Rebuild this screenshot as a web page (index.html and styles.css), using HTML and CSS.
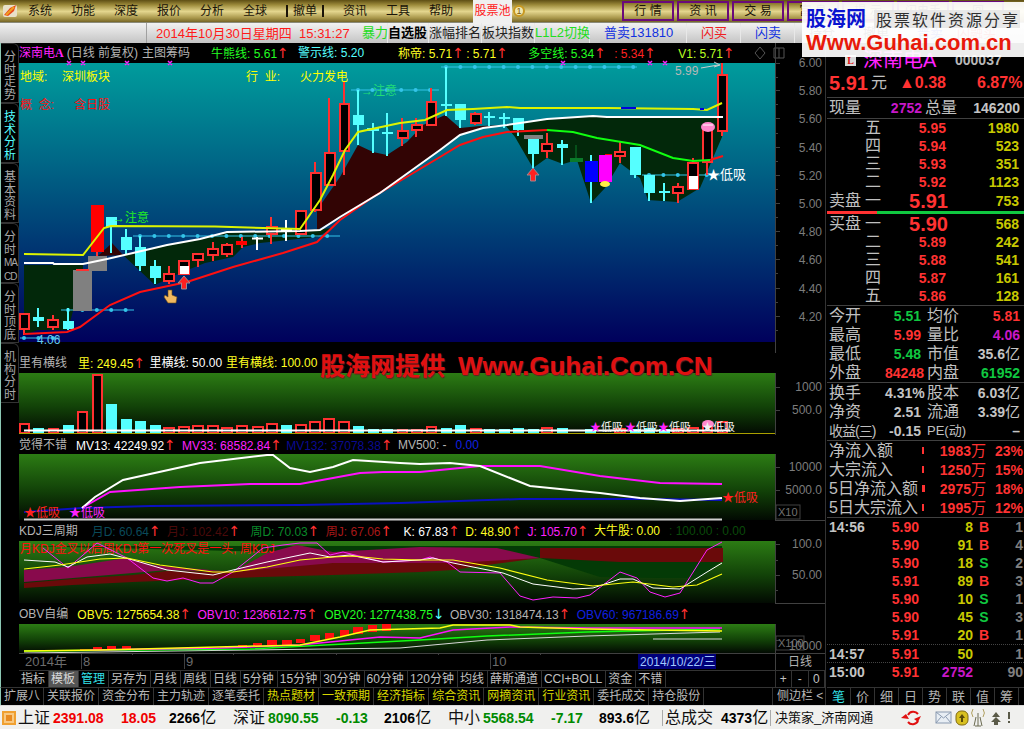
FILE: index.html
```html
<!DOCTYPE html>
<html lang="zh-CN">
<head>
	<meta charset="UTF-8">
	<title>深南电A 日线</title>
	<link rel="stylesheet" href="styles.css">
</head>
<body>
<div class="app">

	<!-- menu -->
	<div class="menubar">
		<svg class="app-icon" width="16" height="16" viewBox="0 0 16 16"><rect x="1" y="2" width="14" height="12" rx="2" fill="#e8e0c8"/><path d="M2 12 L8 5 L14 2 L12 8 L6 13Z" fill="#e8481c"/><path d="M4 12 L12 4" stroke="#f0a020" stroke-width="2"/></svg>
		<a class="menu">系统</a><a class="menu">功能</a><a class="menu">深度</a><a class="menu">报价</a><a class="menu">分析</a><a class="menu">全球</a>
		<a class="menu menu-cancel">撤单</a>
		<a class="menu">资讯</a><a class="menu">工具</a><a class="menu">帮助</a>
		<a class="pool-tab">股票池</a>
		<span class="pool-badge">1</span>
		<div class="mode-btns">
			<a class="mode">行 情</a><a class="mode">资 讯</a><a class="mode">交 易</a><a class="mode">富 息</a><a class="mode">提 示</a><a class="mode">闪电手</a><a class="mode">回</a>
		</div>
	</div>

	<!-- toolbar -->
	<div class="toolbar">
		<span class="tb-blank"></span>
		<span class="tb-date">2014年10月30日星期四&nbsp; 15:31:27</span>
		<a class="tb tb-green tb-w26">暴力</a>
		<a class="tb tb-bold">自选股</a>
		<a class="tb tb-w52">涨幅排名</a>
		<a class="tb tb-w52">板块指数</a>
		<a class="tb tb-green">L1L2切换</a>
		<a class="tb tb-blue tb-w97">普卖131810</a>
		<a class="tb tb-red tb-w54">闪买</a>
		<a class="tb tb-blue tb-w54">闪卖</a>
		<a class="tb tb-w54">持仓</a>
		<a class="tb tb-w54">撤单</a>
		<a class="tb tb-blue tb-w54">普卖</a>
		<a class="tb tb-red">闪融买</a>
	</div>

	<div class="workspace">
		<div class="left">
			<div class="upper">
				<div class="sidetabs">
					<a class="stab">分<br>时<br>走<br>势</a>
					<a class="stab active">技<br>术<br>分<br>析</a>
					<a class="stab">基<br>本<br>资<br>料</a>
					<a class="stab">分<br>时<br><span class="tiny">MA</span><br><span class="tiny">CD</span></a>
					<a class="stab">分<br>时<br>顶<br>底</a>
					<a class="stab">机<br>构<br>分<br>时</a>
				</div>

				<div class="charts">
					<!-- main chart -->
					<div class="head">
						<span class="magenta">深南电<b>A</b></span><span class="grey ml3">(日线 前复权)</span><span class="grey ml4">主图筹码</span>
						<span class="green ml21">牛熊线: 5.61<i class="up">↑</i></span>
						<span class="cyan ml10">警示线: 5.20</span>
						<span class="yellow ml34">称帝: 5.71<i class="up">↑</i></span>
						<span class="yellow ml3">: 5.71<i class="up">↑</i></span>
						<span class="green ml21">多空线: 5.34<i class="up">↑</i></span>
						<span class="red ml9">: 5.34<i class="up">↑</i></span>
						<span class="lime ml23">V1: 5.71<i class="up">↑</i></span>
						<svg class="head-icons" width="32" height="14" viewBox="0 0 32 14"><path d="M6 1 L11 7 L6 13 L1 7Z M20 2H30V12H20Z M25 2V12" fill="none" stroke="#555"/></svg>
					</div>
					<svg class="plot h290" viewBox="19 63 806 290">
						<defs>
							<linearGradient id="sea" x1="0" y1="0" x2="0" y2="1"><stop offset="0" stop-color="#009c9c"/><stop offset=".3" stop-color="#006f8a"/><stop offset="1" stop-color="#00005c"/></linearGradient>
							<linearGradient id="grass" x1="0" y1="0" x2="0" y2="1"><stop offset="0" stop-color="#2c7c14"/><stop offset=".55" stop-color="#124208"/><stop offset="1" stop-color="#020a02"/></linearGradient>
						</defs>
						<rect x="19" y="63" width="756" height="279" fill="url(#sea)"/>
						<!-- bands -->
						<path class="fill-green" d="M24 265H83V311H73L68 330H38L24 335Z"/>
						<path class="fill-green" d="M122 254L155 285 180 273 205 263 233 257 243 247 260 243 317 237 333 228 300 231 227 232 200 239 167 245 133 253Z"/>
						<path class="fill-green" d="M505 125L515 137 533 168 547 158 563 164 577 160 591 203 605 188 620 163 640 178 648 200 677 202 700 188 722 137 723 117 607 117 593 116 547 119 527 122Z"/>
						<path class="fill-maroon" d="M98 256L112 243 123 255Z"/>
						<path class="fill-maroon" d="M317 210L340 177 358 145 373 152 387 155 407 142 423 125 445 115 460 128 480 126 505 125 483 128 460 135 440 150 380 193 340 217 317 230Z"/>
						<!-- dotted levels -->
						<path class="dots-line" d="M441 67H637M351 90H439M133 236H340M61 310H134M20 338H60M642 175H720"/>
						<path class="dots" d="M446 67H637M358 90H439M140 236H340M68 310H134M24 338H60M649 175H720"/>
						<!-- candles -->
						<path class="wick-c" d="M38 308V327M68 308V330M111 227V253M126 229V254M140 236V271M155 260V284M358 90V145M373 123V153M387 113V156M446 67V116M460 104V128M489 112V126M504 113V128M518 118V136M533 139V168M562 140V165M591 155V203M635 147V178M649 175V201M664 183V201"/>
						<path class="wick-r" d="M24 329V335M53 315V330M169 266V284M198 260V267M213 242V261M227 243V257M242 237V248M271 217V244M315 162V212M329 98V185M344 82V175M402 118V146M416 118V137M431 88V125M475 112V125M547 133V158M620 142V163M678 183V203M693 158V189M707 128V175M722 63V136"/>
						<path class="wick-w" d="M257 237V250M252 238.5H263M286 220V241M281 230H292"/>
						<path class="wick-g" d="M576 145V162"/>
						<g class="cy">
							<rect x="33" y="317" width="11" height="4"/><rect x="63" y="321" width="11" height="8"/><rect x="106" y="217" width="11" height="10"/><rect x="121" y="237" width="11" height="13"/><rect x="135" y="247" width="11" height="19"/><rect x="150" y="266" width="11" height="12"/><rect x="353" y="115" width="11" height="10"/><rect x="367" y="128" width="12" height="3"/><rect x="382" y="132" width="11" height="2"/><rect x="441" y="104" width="11" height="2"/><rect x="455" y="104" width="11" height="16"/><rect x="484" y="116" width="11" height="2"/><rect x="499" y="117" width="11" height="2"/><rect x="513" y="118" width="11" height="12"/><rect x="528" y="139" width="11" height="15"/><rect x="557" y="144" width="11" height="4"/><rect x="630" y="147" width="11" height="28"/><rect x="644" y="175" width="11" height="18"/><rect x="659" y="191" width="11" height="2"/>
						</g>
						<g class="rd">
							<rect x="20" y="314" width="9" height="15"/><rect x="48" y="320" width="10" height="7"/><rect x="164" y="274" width="10" height="7"/><rect x="179" y="261" width="10" height="13"/><rect x="193" y="254" width="10" height="6"/><rect x="208" y="249" width="10" height="6"/><rect x="222" y="245" width="10" height="9"/><rect x="267" y="227" width="10" height="7"/><rect x="296" y="211" width="10" height="23"/><rect x="311" y="173" width="10" height="37"/><rect x="325" y="153" width="10" height="32"/><rect x="340" y="104" width="9" height="47"/><rect x="398" y="131" width="10" height="7"/><rect x="412" y="125" width="10" height="5"/><rect x="427" y="102" width="9" height="23"/><rect x="471" y="114" width="10" height="9"/><rect x="542" y="144" width="10" height="7"/><rect x="615" y="152" width="10" height="4"/><rect x="673" y="187" width="10" height="6"/><rect x="688" y="163" width="10" height="26"/><rect x="703" y="129" width="9" height="33"/><rect x="718" y="75" width="9" height="56"/>
						</g>
						<rect class="gray-block" x="73" y="270" width="19" height="41"/>
						<rect class="gray-block" x="88" y="256" width="19" height="15"/>
						<rect class="gray-block" x="524" y="135" width="19" height="4"/>
						<path class="wick-r" d="M76 270H89M97 252V256"/>
						<rect class="solid-red" x="91" y="205" width="13" height="47"/>
						<rect class="solid-red" x="236" y="241" width="11" height="4"/>
						<rect class="solid-red" x="605" y="154" width="7" height="2"/>
						<rect class="solid-white" x="180" y="266" width="9" height="8"/>
						<rect class="solid-white" x="689" y="176" width="9" height="13"/>
						<rect x="570" y="158" width="13" height="4" fill="#0a7a2a"/>
						<rect x="585" y="161" width="13" height="21" fill="#0000ff"/>
						<rect x="599" y="155" width="13" height="27" fill="#ff00ff"/>
						<!-- moving averages -->
						<polyline class="ma-red" points="24,334 67,332 80,327 110,305 140,292 187,282 233,267 283,253 317,242 340,220 373,197 440,157 460,145 483,137 507,132 547,130"/>
						<polyline class="ma-red" points="710,160 723,156"/>
						<polyline class="ma-green" points="547,130 573,132 597,138 640,145 673,158 693,161 710,160"/>
						<polyline class="ma-white" points="24,263 53,263 54,264 83,264 107,259 133,253 167,245 200,239 227,232 300,231 320,230 340,217 380,193 440,150 460,135 483,128 507,125 527,122 547,119 593,116 607,117 723,117"/>
						<polyline class="ma-yellow" points="24,254 83,255 104,228 111,226 215,226.500 300,229 320,200 333,175 345,150 358,132 400,123 425,120 447,110 473,109 507,107 520,108 607,108 693,109 707,110 722,103"/>
						<path d="M621 108H636M700 109H704" stroke="#0000dd" stroke-width="2"/>
						<!-- marks -->
						<path class="cross" d="M67 61l4 4m0-4l-4 4M81 61l4 4m0-4l-4 4M125 61l4 4m0-4l-4 4M168 61l4 4m0-4l-4 4M561 61l4 4m0-4l-4 4M648 61l4 4m0-4l-4 4M663 61l4 4m0-4l-4 4"/>
						<path class="up-mark" d="M184 276L190 283H186.500V289H181.500V283H178Z"/>
						<path class="up-mark" d="M533 168L539 175H535.500V181H530.500V175H527Z"/>
						<ellipse cx="708" cy="127" rx="7" ry="5" fill="#ff88cc"/><path d="M703 125L713 125" stroke="#fff"/>
						<ellipse cx="605" cy="184" rx="5" ry="3" fill="#ffee44"/>
						<!-- hand cursor -->
						<path d="M168 290V297L165 295 164 297 168 303H176L177 297 172 295V290Z" fill="#f0b860" stroke="#6a4a10" stroke-width=".6"/>
						<!-- labels -->
						<text class="t-yellow" x="20" y="81">地域:</text><text class="t-yellow" x="62" y="81">深圳板块</text>
						<text class="t-yellow" x="246" y="81">行&nbsp; 业:</text><text class="t-yellow" x="300" y="81">火力发电</text>
						<text class="t-red" x="20" y="109">概&nbsp; 念:</text><text class="t-red" x="74" y="109">含日股</text>
						<text class="t-green" x="113" y="222">→注意</text>
						<text class="t-green t-soft" x="361" y="95">→注意</text>
						<text class="t-ice" x="37" y="344">4.06</text>
						<text class="t-pale" x="675" y="75">5.99</text>
						<path d="M701 68L718 65M714 62L720 65 714 67" fill="none" stroke="#ccc"/>
						<text class="t-white" x="707" y="179">★低吸</text>
						<!-- axis -->
						<path class="axis" d="M775.500 43V353M775 63h5M775 77h3M775 90h5M775 104h3M775 118h5M775 133h3M775 147h5M775 161h3M775 175h5M775 189h3M775 203h5M775 217h3M775 231h5M775 245h3M775 259h5M775 273h3M775 288h5M775 302h3M775 316h5M775 330h3"/>
						<g class="axis-text">
							<text x="822" y="67">6.00</text><text x="822" y="95">5.80</text><text x="822" y="123">5.60</text><text x="822" y="152">5.40</text><text x="822" y="180">5.20</text><text x="822" y="208">5.00</text><text x="822" y="236">4.80</text><text x="822" y="264">4.60</text><text x="822" y="293">4.40</text><text x="822" y="321">4.20</text>
						</g>
					</svg>

					<!-- volume -->
					<div class="head">
						<span class="grey">里有横线</span>
						<span class="yellow ml11">里: 249.45<i class="up">↑</i></span>
						<span class="white ml5">里横线: 50.00</span>
						<span class="yellow ml4">里有横线: 100.00</span>
					</div>
					<svg class="plot h62" viewBox="19 373 806 62">
						<rect x="19" y="373" width="756" height="61" fill="url(#grass)"/>
						<g class="cy">
							<rect x="33" y="428" width="11" height="5"/><rect x="63" y="425" width="11" height="8"/><rect x="106" y="404" width="11" height="29"/><rect x="121" y="419" width="11" height="14"/><rect x="135" y="421" width="11" height="12"/><rect x="150" y="425" width="11" height="8"/><rect x="281" y="425" width="11" height="8"/><rect x="353" y="426" width="11" height="7"/><rect x="368" y="429" width="11" height="4"/><rect x="382" y="429" width="11" height="4"/><rect x="441" y="428" width="11" height="5"/><rect x="455" y="425" width="11" height="8"/><rect x="484" y="429" width="11" height="4"/><rect x="499" y="429" width="11" height="4"/><rect x="513" y="428" width="11" height="5"/><rect x="528" y="429" width="11" height="4"/><rect x="557" y="428" width="11" height="5"/><rect x="585" y="429" width="11" height="4"/><rect x="630" y="429" width="11" height="4"/><rect x="644" y="428" width="11" height="5"/><rect x="659" y="429" width="11" height="4"/>
						</g>
						<g class="rd">
							<rect x="20" y="424" width="9" height="9"/><rect x="49" y="429" width="9" height="4"/><rect x="78" y="412" width="9" height="21"/><rect x="93" y="375" width="9" height="58"/><rect x="164" y="428" width="10" height="5"/><rect x="179" y="427" width="10" height="6"/><rect x="193" y="426" width="10" height="7"/><rect x="208" y="426" width="10" height="7"/><rect x="222" y="428" width="10" height="5"/><rect x="237" y="426" width="10" height="7"/><rect x="253" y="427" width="10" height="6"/><rect x="267" y="424" width="10" height="9"/><rect x="296" y="425" width="10" height="8"/><rect x="310" y="422" width="10" height="11"/><rect x="324" y="419" width="10" height="14"/><rect x="339" y="422" width="10" height="11"/><rect x="398" y="430" width="9" height="3"/><rect x="412" y="430" width="10" height="3"/><rect x="427" y="427" width="9" height="6"/><rect x="471" y="429" width="10" height="4"/><rect x="542" y="428" width="10" height="5"/><rect x="615" y="429" width="10" height="4"/><rect x="673" y="429" width="10" height="4"/><rect x="688" y="428" width="10" height="5"/><rect x="703" y="426" width="9" height="7"/><rect x="718" y="422" width="9" height="11"/>
						</g>
						<path d="M24 430.500H730" stroke="#fff" stroke-width="2"/>
						<path d="M19 433.500H775" stroke="#aaa000"/>
						<ellipse cx="708" cy="424" rx="6" ry="4" fill="#ff88cc"/>
						<text class="t-white-s" x="590" y="431"><tspan class="t-fill-magenta">★</tspan>低吸</text>
						<text class="t-white-s" x="625" y="431"><tspan class="t-fill-magenta">★</tspan>低吸</text>
						<text class="t-white-s" x="658" y="431"><tspan class="t-fill-magenta">★</tspan>低吸</text>
						<text class="t-white-s" x="702" y="431">★低吸</text>
						<path class="axis" d="M775.500 373V435M775 387h5M775 410h5"/>
						<g class="axis-text"><text x="822" y="391">1000</text><text x="822" y="414">500.0</text></g>
					</svg>

					<!-- mv -->
					<div class="head h19">
						<span class="grey">觉得不错</span>
						<span class="white ml9">MV13: 42249.92<i class="up">↑</i></span>
						<span class="magenta ml7">MV33: 68582.84<i class="up">↑</i></span>
						<span class="navy ml5">MV132: 37078.38<i class="up">↑</i></span>
						<span class="grey ml6">MV500: -</span>
						<span class="blue ml9">0.00</span>
					</div>
					<svg class="plot h67" viewBox="19 454 806 67">
						<rect x="19" y="454" width="756" height="66" fill="url(#grass)"/>
						<path d="M24 519.500H722" stroke="#d0d0d0" stroke-width="2"/>
						<polyline class="ln-blue" points="24,512 82,508 150,506 300,505 400,503 520,499 650,499 722,500"/>
						<polyline class="ln-magenta" points="82,508 110,492 180,487 250,484 300,484 333,478 360,473 383,472 420,472 480,466 540,466 600,476 660,483 722,484"/>
						<polyline class="ln-white" points="82,508 95,497 123,480 200,463 267,455 273,455 290,468 310,472 333,467 353,460 400,463 420,464 450,463 480,466 510,478 530,486 570,490 600,493 640,498 680,501 722,498"/>
						<text class="t-red-s" x="24" y="517">★低吸</text>
						<text class="t-magenta-s" x="69" y="517">★低吸</text>
						<text class="t-red-s" x="722" y="502">★低吸</text>
						<path class="axis" d="M775.500 454V521M775 467h5M775 490h5M775 520.500H825"/>
						<g class="axis-text"><text x="822" y="471">10000</text><text x="822" y="494">5000.0</text></g>
						<rect class="xbox" x="776" y="505" width="24" height="14"/>
						<text class="x-label" x="778" y="516">X10</text>
					</svg>

					<!-- kdj -->
					<div class="head">
						<span class="grey">KDJ三周期</span>
						<span class="dim-teal ml14">月D: 60.64<i class="up">↑</i></span>
						<span class="dim-red ml7">月J: 102.42<i class="up">↑</i></span>
						<span class="mid-green ml11">周D: 70.03<i class="up">↑</i></span>
						<span class="mid-red ml7">周J: 67.06<i class="up">↑</i></span>
						<span class="white ml12">K: 67.83<i class="up">↑</i></span>
						<span class="yellow ml6">D: 48.90<i class="up">↑</i></span>
						<span class="magenta ml6">J: 105.70<i class="up">↑</i></span>
						<span class="yellow ml6">大牛股: 0.00</span>
						<span class="dim-green ml9">: 100.00 : 0.00</span>
					</div>
					<svg class="plot h63" viewBox="19 541 806 63">
						<rect x="19" y="541" width="756" height="62" fill="url(#grass)"/>
						<path d="M24 546H722V561L700 578 660 578 600 577 540 558Z" fill="#043a06"/>
						<path d="M540 548H723V562H660L620 562 540 558Z" fill="#6a0a0a"/>
						<path d="M24 583L73 579 133 575 167 571 233 572 267 565 333 563 420 562 540 558 487 565 453 570 420 572 333 575 233 578 133 582 73 585 24 588Z" fill="#6a0a0a"/>
						<path class="fill-purple" d="M24 570L67 567 127 558 153 565 233 572 267 553 297 545 333 552 420 547 497 548 540 558 453 563 420 563 333 563 233 572 167 570 133 573 73 578 24 582Z"/>
						<text class="t-red" x="20" y="553">月KDJ金叉以后周KDJ第一次死叉是一头, 周KDJ</text>
						<polyline class="kd-magenta" points="43,548 68,568 97,543 127,558 153,578 167,581 183,578 200,583 213,583 233,572 263,548 283,545 300,543 317,543 330,555 343,552 383,562 420,560 430,557 447,562 460,572 500,573 520,596 533,600 553,597 577,598 590,595 620,572 637,578 650,592 665,597 680,593 707,550 722,542"/>
						<polyline class="kd-white" points="24,560 55,562 68,567 87,557 110,554 133,560 167,570 213,575 233,570 267,562 310,553 330,557 350,555 383,562 420,560 433,558 453,563 503,573 533,584 573,589 593,588 620,579 633,579 653,588 680,589 707,572 722,563"/>
						<polyline class="kd-yellow" points="24,569 60,565 100,559 127,558 160,565 213,572 233,572 267,567 300,560 333,557 353,556 383,559 420,560 453,560 500,568 547,580 593,586 633,582 673,587 697,585 722,574"/>
						<path class="axis" d="M775.500 541V604M775 544h5M775 560h3M775 575h5M775 590h3M775 603.500H825"/>
						<g class="axis-text"><text x="822" y="548">100.0</text><text x="822" y="579">50.00</text></g>
					</svg>

					<!-- obv -->
					<div class="head">
						<span class="grey">OBV自编</span>
						<span class="yellow ml9">OBV5: 1275654.38<i class="up">↑</i></span>
						<span class="magenta ml7">OBV10: 1236612.75<i class="up">↑</i></span>
						<span class="green ml7">OBV20: 1277438.75<i class="down">↓</i></span>
						<span class="grey ml6">OBV30: 1318474.13<i class="up">↑</i></span>
						<span class="blue ml7">OBV60: 967186.69<i class="up">↑</i></span>
					</div>
					<svg class="plot h29" viewBox="19 624 806 29">
						<rect x="19" y="624" width="756" height="29" fill="url(#grass)"/>
						<path class="steps-red" d="M33 650h10v1H33zM80 649h10v2H80zM93 647h9v3h-9zM107 646h9v3h-9zM122 646h9v3h-9zM238 645h9v3h-9zM253 643h9v4h-9zM267 640h10v5H267zM282 640h10v5H282zM296 639h9v4h-9zM310 635h10v6H310zM325 633h9v6h-9zM340 630h9v6h-9zM353 627h10v7H353zM368 625h9v7h-9zM382 624h9v7h-9z"/>
						<polyline class="ob-white" points="24,653 400,648 487,640 587,636 720,632"/>
						<polyline class="ob-green" points="24,651 250,649 420,640 487,636 587,632 720,629"/>
						<polyline class="ob-magenta" points="90,650 220,648 300,645 380,637 420,638 453,630 510,627 587,628 670,628 722,628"/>
						<polyline class="ob-yellow" points="24,651 100,650 300,645 340,637 370,630 440,628 453,625 510,625 520,627 587,629 722,631"/>
						<path class="ob-white" d="M653 639H722"/>
						<path class="axis" d="M775.500 624V653M775 640h5"/>
						<rect class="xbox" x="776" y="636" width="28" height="14"/>
						<text class="x-label" x="778" y="647">X100</text>
						<text class="axis-text" x="822" y="650">10000</text>
					</svg>

					<!-- time axis -->
					<svg class="plot h17" viewBox="19 653 806 17">
						<path class="axis" d="M19 653.500H825M81.500 653v16M184.500 653v16M490.500 653v16M775.500 653V670M132 653v2M233 653v2M336 653v2M438 653v2M540 653v2"/>
						<text class="date-text" x="25" y="666">2014年</text>
						<text class="date-text" x="83" y="666">8</text>
						<text class="date-text" x="186" y="666">9</text>
						<text class="date-text" x="492" y="666">10</text>
						<rect x="638" y="654" width="78" height="15" fill="#00007a"/>
						<text class="date-pick" x="640" y="666">2014/10/22/三</text>
						<text class="date-line" x="788" y="666">日线</text>
					</svg>

					<div class="tabs1">
						<a class="t1">指标</a><a class="t1 t1-on">模板</a><a class="t1 t1-cyan">管理</a><a class="t1">另存为</a><a class="t1">月线</a><a class="t1">周线</a><a class="t1">日线</a><a class="t1">5分钟</a><a class="t1">15分钟</a><a class="t1">30分钟</a><a class="t1">60分钟</a><a class="t1">120分钟</a><a class="t1">均线</a><a class="t1">薛斯通道</a><a class="t1">CCI+BOLL</a><a class="t1">资金</a><a class="t1">不错</a>
						<div class="zoom-btns"><a>+</a><a>-</a><a>0</a></div>
					</div>
				</div>
			</div>

			<div class="tabs2">
				<a class="t2">扩展八</a><a class="t2">关联报价</a><a class="t2">资金分布</a><a class="t2">主力轨迹</a><a class="t2">逐笔委托</a><a class="t2 t2-y">热点题材</a><a class="t2 t2-y">一致预期</a><a class="t2 t2-y">经济指标</a><a class="t2 t2-y">综合资讯</a><a class="t2 t2-y">网摘资讯</a><a class="t2 t2-y">行业资讯</a><a class="t2">委托成交</a><a class="t2">持仓股份</a>
				<a class="t2 t2-side">侧边栏 &lt;</a>
			</div>
		</div>

		<!-- quote panel -->
		<div class="quote">
			<div class="q-title">
				<span class="q-l">L</span><span class="q-name">深南电A</span><span class="q-code">000037</span>
			</div>
			<div class="q-price line">
				<span class="q-now">5.91</span><span class="q-yuan">元</span><span class="q-chg">▲0.38</span><span class="q-pct">6.87%</span>
			</div>
			<div class="q-vol line">
				<span class="lab">现量</span><span class="n purple">2752</span><span class="lab lab-mid">总量</span><span class="n gray">146200</span>
			</div>

			<div class="bk"><span class="lab"></span><span class="lab">五</span><span class="n rd-t">5.95</span><span class="n ye">1980</span></div>
			<div class="bk"><span class="lab"></span><span class="lab">四</span><span class="n rd-t">5.94</span><span class="n ye">523</span></div>
			<div class="bk"><span class="lab"></span><span class="lab">三</span><span class="n rd-t">5.93</span><span class="n ye">351</span></div>
			<div class="bk"><span class="lab"></span><span class="lab">二</span><span class="n rd-t">5.92</span><span class="n ye">1123</span></div>
			<div class="bk bk-big bk-h20"><span class="lab">卖盘</span><span class="lab">一</span><span class="n rd-t">5.91</span><span class="n ye">753</span></div>
			<div class="split"><i class="split-red"></i><i class="split-green"></i></div>
			<div class="bk bk-big bk-h19"><span class="lab">买盘</span><span class="lab">一</span><span class="n rd-t">5.90</span><span class="n ye">568</span></div>
			<div class="bk"><span class="lab"></span><span class="lab">二</span><span class="n rd-t">5.89</span><span class="n ye">242</span></div>
			<div class="bk"><span class="lab"></span><span class="lab">三</span><span class="n rd-t">5.88</span><span class="n ye">541</span></div>
			<div class="bk"><span class="lab"></span><span class="lab">四</span><span class="n rd-t">5.87</span><span class="n ye">161</span></div>
			<div class="bk line"><span class="lab"></span><span class="lab">五</span><span class="n rd-t">5.86</span><span class="n ye">128</span></div>

			<div class="st"><span class="lab">今开</span><span class="n gr-t">5.51</span><span class="lab">均价</span><span class="n rd-t">5.81</span></div>
			<div class="st"><span class="lab">最高</span><span class="n rd-t">5.99</span><span class="lab">量比</span><span class="n purple">4.06</span></div>
			<div class="st"><span class="lab">最低</span><span class="n gr-t">5.48</span><span class="lab">市值</span><span class="n gray">35.6<em>亿</em></span></div>
			<div class="st line"><span class="lab">外盘</span><span class="n rd-t">84248</span><span class="lab">内盘</span><span class="n gr-t">61952</span></div>

			<div class="st"><span class="lab">换手</span><span class="n gray">4.31%</span><span class="lab">股本</span><span class="n gray">6.03<em>亿</em></span></div>
			<div class="st"><span class="lab">净资</span><span class="n gray">2.51</span><span class="lab">流通</span><span class="n gray">3.39<em>亿</em></span></div>
			<div class="st line"><span class="lab lab-tight">收益(三)</span><span class="n gray">-0.15</span><span class="lab lab-pe">PE(动)</span><span class="n gray">–</span></div>

			<div class="fl"><span class="lab">净流入额</span><i class="fbar"></i><span class="n rd-t">1983<em>万</em></span><span class="n rd-t">23%</span></div>
			<div class="fl"><span class="lab">大宗流入</span><i class="fbar"></i><span class="n rd-t">1250<em>万</em></span><span class="n rd-t">15%</span></div>
			<div class="fl"><span class="lab">5日净流入额</span><i class="fbar fbar-w"></i><span class="n rd-t">2975<em>万</em></span><span class="n rd-t">18%</span></div>
			<div class="fl line"><span class="lab">5日大宗流入</span><i class="fbar"></i><span class="n rd-t">1995<em>万</em></span><span class="n rd-t">12%</span></div>

			<div class="tk"><span class="gray">14:56</span><span class="rd-t">5.90</span><span class="ye">8</span><span class="rd-t">B</span><span class="dim">1</span></div>
			<div class="tk"><span></span><span class="rd-t">5.90</span><span class="ye">91</span><span class="rd-t">B</span><span class="dim">4</span></div>
			<div class="tk"><span></span><span class="rd-t">5.90</span><span class="ye">18</span><span class="gr-t">S</span><span class="dim">2</span></div>
			<div class="tk"><span></span><span class="rd-t">5.91</span><span class="ye">89</span><span class="rd-t">B</span><span class="dim">3</span></div>
			<div class="tk"><span></span><span class="rd-t">5.90</span><span class="ye">10</span><span class="gr-t">S</span><span class="dim">1</span></div>
			<div class="tk"><span></span><span class="rd-t">5.90</span><span class="ye">45</span><span class="gr-t">S</span><span class="dim">3</span></div>
			<div class="tk"><span></span><span class="rd-t">5.91</span><span class="ye">20</span><span class="rd-t">B</span><span class="dim">1</span></div>
			<div class="tk dash"><span class="gray">14:57</span><span class="rd-t">5.91</span><span class="ye">50</span><span></span><span class="dim">1</span></div>
			<div class="tk dash"><span class="gray">15:00</span><span class="rd-t">5.91</span><span class="purple">2752</span><span></span><span class="dim">90</span></div>

			<div class="q-tabs"><a class="q-on">笔</a><a>价</a><a>细</a><a>日</a><a>势</a><a>联</a><a>值</a><a>筹</a></div>
		</div>
	</div>

	<!-- status bar -->
	<div class="statusbar">
		<span class="st-icon"></span>
		<div class="idx"><span class="idx-name">上证</span><b class="s-red">2391.08</b><b class="s-red">18.05</b><b class="s-black">2266<em>亿</em></b></div>
		<div class="idx"><span class="idx-name">深证</span><b class="s-green">8090.55</b><b class="s-green">-0.13</b><b class="s-black">2106<em>亿</em></b></div>
		<div class="idx idx-last"><span class="idx-name">中小</span><b class="s-green">5568.54</b><b class="s-green">-7.17</b><b class="s-black">893.6<em>亿</em></b></div>
		<div class="total"><span class="idx-name">总成交</span><b class="s-black">4373<em>亿</em></b></div>
		<div class="net">决策家_济南网通</div>
		<svg class="st-svg" width="119" height="22" viewBox="905 706 119 22">
			<path d="M912 714a6 6 0 0 1 10 -1M922 720a6 6 0 0 1 -10 1" fill="none" stroke="#e01010" stroke-width="2"/><path d="M905 717l5-4 3 5zM925 715l-3 6-4-3z" fill="#e01010"/>
			<rect x="940" y="711" width="15" height="11" fill="#e8eef4" stroke="#8a9ab0"/><path d="M940 711l7.500 6 7.500-6M940 722l5-6M955 722l-5-6" fill="none" stroke="#8a9ab0"/>
			<rect x="960" y="710" width="12" height="14" rx="5" fill="#d8c020" stroke="#806a10"/><path d="M966 713l3 4h-2v4h-2v-4h-2z" fill="#5a4a08"/>
			<path d="M982 712V725M979 725h6M980 716l-2 9M984 716l2 9" stroke="#6a6a50" fill="none"/><path d="M977 708a7 7 0 0 0 0 8M987 708a7 7 0 0 1 0 8" fill="none" stroke="#b0a060"/>
			<path d="M1000 711l4 5h-8zM1000 716l5 5h-10zM998 721h4v3h-4z" fill="#5a5a48"/>
			<path d="M1012 711h2v7h-2zM1012 720h2v2h-2z" fill="#5a5a48"/>
		</svg>
	</div>

	<!-- overlays -->
	<div class="logo">
		<div class="logo-top"><b class="logo-cn">股海网</b><span class="logo-slogan">股票软件资源分享</span></div>
		<b class="logo-url">Www.Guhai.com.cn</b>
	</div>
	<div class="watermark">股海网提供 <span>Www.Guhai.Com.CN</span></div>
</div>
</body>
</html>
```
FILE: styles.css
```css
* {box-sizing: border-box;}
html, body {margin: 0; padding: 0; background: #000;}
body {font: 12px/1 "Liberation Sans", "Noto Sans CJK SC", sans-serif; color: #c0c0c0;}
a {display: block;}
i, em {font-style: normal; font-weight: normal;}
svg {display: block;}

.app {position: relative; width: 1024px; height: 729px; overflow: hidden; background: #000;}

/* menu */
.menubar {display: flex; align-items: center; height: 23px; padding-left: 2px; background: linear-gradient(#5e4e14, #9c8a3a 22%, #e4d68e 52%, #a8964a 82%, #756526); border-bottom: 1px solid #8a8a7a;}
.app-icon {margin-right: 10px; flex: none;}
.menu {width: 43px; font-size: 12px; color: #1a1408;}
.menu-cancel {width: 38px; margin-right: 19px; border-left: 2px solid #1a1408; border-right: 2px solid #1a1408; text-indent: 5px;}
.pool-tab {width: 39px; height: 23px; margin-left: 1px; line-height: 23px; text-align: center; background: #f0f0f0; color: #ff2020; white-space: nowrap;}
.pool-badge {width: 12px; height: 12px; margin-left: 1px; border: 2px solid #c89820; border-radius: 50%; background: #f0e8b0; color: #7a5a10; font-size: 9px; line-height: 8px; text-align: center;}
.mode-btns {display: flex; margin-left: 97px;}
.mode {width: 52px; height: 20px; margin-right: 3px; flex: none; border: 2px solid #6a0a7a; text-align: center; line-height: 16px; color: #1a1408; white-space: nowrap;}

/* toolbar */
.toolbar {display: flex; height: 20px; background: linear-gradient(#f2f2f2, #c4c4c4); line-height: 20px; font-size: 13px; color: #222; white-space: nowrap;}
.tb-blank {width: 145px; flex: none; border-right: 1px solid #a0a0a0; margin-left: 2px;}
.tb-date {width: 215px; flex: none; padding-left: 9px; color: #ff1a1a; line-height: 22px;}
.tb {flex: none; box-shadow: inset -1px 0 #e8e8e8;}
.tb-w26 {width: 26px;}
.tb-w52 {width: 53px;}
.tb-w97 {width: 97px; padding-left: 14px;}
.tb-w54 {width: 54px; text-align: center;}
.tb-bold {font-weight: bold; color: #000; padding-right: 2px;}
.tb-green {color: #22dd22;}
.tb-blue {color: #1030e0;}
.tb-red {color: #ee2020;}

/* layout */
.workspace {display: flex; height: 662px;}
.left {display: flex; flex-direction: column; width: 825px; flex: none;}
.upper {display: flex; height: 644px;}
.sidetabs {width: 19px; flex: none; border-left: 1px solid #8cc8b4; background: #000;}
.stab {height: 60px; padding: 7px 0 0 3px; line-height: 12.500px; color: #a8a8a8; font-size: 12px; border: 1px solid #333; border-left: 0; border-top-right-radius: 6px;}
.stab.active {color: #55ffff;}
.tiny {font-size: 10px; letter-spacing: -1px;}
.charts {width: 806px; flex: none;}

.head {display: flex; align-items: center; height: 20px; white-space: nowrap;}
.head.h19 {height: 19px;}
.head span {flex: none;}
.head b {font-family: "Liberation Serif", serif;}
.up, .down {display: inline-block; width: 11px; font-family: "DejaVu Sans", sans-serif; font-size: 14px; text-align: center;}
.up {color: #ff3030;}
.down {color: #55ffff;}
.head-icons {margin-left: 20px;}

.ml3 {margin-left: 3px;}
.ml4 {margin-left: 4px;}
.ml5 {margin-left: 5px;}
.ml6 {margin-left: 6px;}
.ml7 {margin-left: 7px;}
.ml9 {margin-left: 9px;}
.ml10 {margin-left: 10px;}
.ml11 {margin-left: 11px;}
.ml12 {margin-left: 12px;}
.ml14 {margin-left: 14px;}
.ml21 {margin-left: 21px;}
.ml23 {margin-left: 23px;}
.ml34 {margin-left: 34px;}

.magenta {color: #ff22ff;}
.grey {color: #b4b4b4;}
.green {color: #22ff22;}
.cyan {color: #55ffff;}
.yellow {color: #ffff22;}
.red {color: #ff2222;}
.lime {color: #bbff22;}
.white {color: #fff;}
.navy {color: #0a0a90;}
.blue {color: #1020e0;}
.dim-teal {color: #0a4a5a;}
.dim-red {color: #4a0a0a;}
.mid-green {color: #0a8a2a;}
.mid-red {color: #a81818;}
.dim-green {color: #0a4a0a;}

.plot {width: 806px; overflow: visible;}
.h290 {height: 290px;}
.h62 {height: 62px;}
.h67 {height: 67px;}
.h63 {height: 63px;}
.h29 {height: 29px;}
.h17 {height: 17px;}

/* chart parts */
.fill-green {fill: #02280a;}
.fill-maroon {fill: #320404;}
.fill-purple {fill: #880a4c;}
.dots-line {stroke: #33c4e8; fill: none;}
.dots {stroke: #33c4e8; fill: none; stroke-width: 4; stroke-linecap: round; stroke-dasharray: 0 14.400;}
.wick-c {stroke: #55ffff; stroke-width: 2; fill: none;}
.wick-r {stroke: #ff3030; stroke-width: 2; fill: none;}
.wick-w {stroke: #fff; stroke-width: 2; fill: none;}
.wick-g {stroke: #0a7a2a; stroke-width: 1; fill: none;}
.cy rect {fill: #55ffff;}
.rd rect {fill: #000; stroke: #ff3030; stroke-width: 2;}
.gray-block {fill: #808080;}
.solid-red {fill: #ff0000;}
.solid-white {fill: #fff;}
.ma-red {fill: none; stroke: #ff1010; stroke-width: 2;}
.ma-green {fill: none; stroke: #10ff10; stroke-width: 2;}
.ma-white {fill: none; stroke: #fff; stroke-width: 2;}
.ma-yellow {fill: none; stroke: #dcf400; stroke-width: 2;}
.cross {stroke: #ff22ff; stroke-width: 1.500;}
.up-mark {fill: #ff2020; stroke: #a08890;}
.axis {stroke: #404040; fill: none; shape-rendering: crispEdges;}
.axis-text text, text.axis-text {fill: #7c7c7c; font-size: 12px; text-anchor: end;}
.xbox {fill: none; stroke: #404040;}
.x-label {fill: #707070; font-size: 11px;}
.ln-blue {fill: none; stroke: #0a10c0; stroke-width: 2;}
.ln-magenta {fill: none; stroke: #ff10ff; stroke-width: 2;}
.ln-white {fill: none; stroke: #fff; stroke-width: 2;}
.kd-magenta {fill: none; stroke: #ff20ff; stroke-width: 1;}
.kd-white {fill: none; stroke: #fff; stroke-width: 1;}
.kd-yellow {fill: none; stroke: #ffff10; stroke-width: 1.200;}
.steps-red {fill: #ff1010;}
.ob-white {fill: none; stroke: #d8d8d8;}
.ob-green {fill: none; stroke: #10ff10; stroke-width: 1.500;}
.ob-magenta {fill: none; stroke: #ff10ff; stroke-width: 1.500;}
.ob-yellow {fill: none; stroke: #ffff10; stroke-width: 1.500;}

.t-yellow {fill: #ffff00; font-size: 12px;}
.t-red {fill: #ff1010; font-size: 12px;}
.t-green {fill: #22ee22; font-size: 12px;}
.t-soft {fill: #22dd77;}
.t-ice {fill: #66ccee; font-size: 12px;}
.t-pale {fill: #b8b8b8; font-size: 12px;}
.t-white {fill: #fff; font-size: 13px;}
.t-white-s {fill: #f0f0f0; font-size: 11px;}
.t-fill-magenta {fill: #ff22ff;}
.t-red-s {fill: #ff2020; font-size: 12px;}
.t-magenta-s {fill: #ff22ff; font-size: 12px;}
.date-text {fill: #6c6c6c; font-size: 13px;}
.date-pick {fill: #a0c8ff; font-size: 12px;}
.date-line {fill: #b0b0b0; font-size: 12px;}

/* tabs */
.tabs1 {display: flex; height: 17px; white-space: nowrap; border-top: 1px solid #333; line-height: 16px;}
.t1 {padding: 0 3px 0 2px; border-right: 1px solid #333; color: #c0c0c0; flex: none;}
.t1-on {background: #555; color: #d8d8d8;}
.t1-cyan {color: #33e0e8;}
.zoom-btns {display: flex; margin-left: auto; border-left: 1px solid #333;}
.zoom-btns a {width: 16.500px; text-align: center; color: #c0c0c0; border-right: 1px solid #333;}

.tabs2 {display: flex; height: 18px; padding-left: 1px; white-space: nowrap; border-top: 1px solid #333; border-left: 1px solid #8cc8b4; line-height: 17px; background: #000;}
.t2 {padding: 0 3px; border-right: 1px solid #333; color: #b8b8b8; flex: none;}
.t2:first-child {padding: 0 3px 0 2px;}
.t2-y {color: #d8d800;}
.t2-side {margin-left: auto; padding-left: 4px; width: 53px; border-left: 1px solid #333; border-right: 0;}

/* quote panel */
.quote {display: flex; flex-direction: column; width: 199px; flex: none; background: #000; border-left: 1px solid #333; padding-left: 1px; font-size: 14px; white-space: nowrap;}
.line {border-bottom: 1px solid #404040;}
.lab {font-size: 16px; color: #c0c0c0;}
.n {font-weight: bold; text-align: right;}
.n em {font-size: 15px;}
.purple {color: #c818c8; font-weight: bold;}
.gray {color: #c4c4c4; font-weight: bold;}
.rd-t {color: #ff3232; font-weight: bold;}
.gr-t {color: #10c840; font-weight: bold;}
.ye {color: #c8c800; font-weight: bold;}
.dim {color: #808080; font-weight: bold;}

.q-title {display: flex; align-items: center; height: 26px; padding: 8px 0 0 18px; flex: none;}
.q-l {width: 11px; height: 11px; background: #d8d8d8; color: #e01010; font: bold 10px/11px "Liberation Serif", serif; text-align: center;}
.q-name {width: 92px; margin-left: 7px; font-size: 20px; color: #ff22ff;}
.q-code {color: #b8b8b8; font-weight: bold; font-size: 14px;}
.q-price {display: flex; align-items: center; height: 29px; padding-left: 2px; flex: none;}
.q-now {width: 42px; font: bold 20px "Liberation Sans", sans-serif; color: #ff3232;}
.q-yuan {width: 28px; font-size: 16px; color: #c0c0c0;}
.q-chg {width: 78px; font-weight: bold; font-size: 16px; color: #ff3232;}
.q-pct {font-weight: bold; font-size: 16px; color: #ff3232;}
.q-vol {display: grid; grid-template-columns: 36px 57px 32px 1fr; align-items: center; height: 21px; padding: 0 4px 0 2px; flex: none;}
.lab-mid {padding-left: 3px; white-space: nowrap;}

.bk {display: grid; grid-template-columns: 36px 20px 61px 73px; align-items: center; height: 18px; padding-left: 2px; flex: none;}
.bk.line {height: 19px;}
.bk-h20 {height: 20px;}
.bk-h19 {height: 19px;}
.bk-big .n.rd-t {font-size: 20px; margin-right: -2px;}
.split {display: flex; height: 3px; flex: none;}
.split-red {width: 50px; background: #ff3232;}
.split-green {flex: 1; background: #10c840;}

.st {display: grid; grid-template-columns: 56px 36px 40px 59px; align-items: center; height: 19px; padding-left: 2px; flex: none;}
.st .lab:nth-child(3) {padding-left: 6px; white-space: nowrap;}
.st.line {height: 20px;}
.lab-tight {letter-spacing: -1px; white-space: nowrap; font-size: 14px;}
.st .lab-pe {font-size: 13px; padding-left: 6px;}

.fl {display: grid; grid-template-columns: 91px 14px 52px 37px; align-items: center; height: 19px; padding-left: 2px; flex: none;}
.fl.line {height: 20px;}
.fbar {width: 2px; height: 7px; background: #ff3232; margin-left: 2px;}
.fbar-w {width: 3px;}

.tk {display: grid; grid-template-columns: 40px 50px 54px 22px 28px; align-items: center; height: 18px; padding-left: 2px; flex: none; font-size: 14px;}
.tk span:nth-child(2) {text-align: right;}
.tk span:nth-child(3) {text-align: right;}
.tk span:nth-child(4) {text-align: center;}
.tk span:nth-child(5) {text-align: right;}
.dash {border-top: 1px dotted #444;}

.q-tabs {display: flex; height: 18px; margin-top: auto; border-top: 1px solid #333; flex: none;}
.q-tabs a {width: 24px; text-align: center; font-size: 13px; line-height: 17px; color: #b0b0b0; border-right: 1px solid #333;}
.q-tabs .q-on {color: #33e0e8;}

/* status bar */
.statusbar {display: flex; align-items: center; height: 24px; padding-left: 2px; background: #f0f0ee; border-top: 1px solid #d8d8d8; color: #111; white-space: nowrap;}
.st-icon {width: 14px; height: 14px; margin-right: 2px; flex: none; border: 2px solid #f0a030; background: #e88a20; box-shadow: inset 0 0 0 2px #f8c880;}
.idx {display: grid; grid-template-columns: 35px 68px 48px 1fr; align-items: center; width: 215px; flex: none; font-size: 14px;}
.idx-last {width: 215px; border-right: 1px solid #aaa;}
.idx-name {font-size: 16px;}
.idx b em, .total b em {font-size: 16px;}
.s-red {color: #f00000;}
.s-green {color: #008a00;}
.s-black {color: #000;}
.total {display: flex; align-items: center; width: 108px; flex: none; padding-left: 2px; font-size: 14px; border-right: 1px solid #aaa;}
.total b {margin-left: 8px;}
.net {width: 130px; flex: none; padding-left: 4px; font-size: 13px;}
.st-svg {flex: none;}

/* overlays */
.logo {position: absolute; left: 802px; top: 2px; width: 222px; height: 55px; padding: 4px 0 0 4px; background: rgba(255, 255, 255, .93);}
.logo-top {display: flex; align-items: center; height: 25px;}
.logo-cn {width: 68px; font-size: 20px; color: #0a14d0;}
.logo-slogan {padding: 1px 0 1px 2px; font-family: "Noto Sans CJK SC", serif; font-size: 16px; letter-spacing: 2px; color: #303030; background: #e8e8e8; white-space: nowrap;}
.logo-url {display: block; margin-top: 0; font-size: 22px; line-height: 24px; color: #e81a0a; white-space: nowrap;}
.watermark {position: absolute; left: 320px; top: 351px; font-size: 25px; line-height: 30px; font-weight: bold; color: #e01010; text-shadow: 1px 1px 1px #602020; white-space: nowrap;}
.watermark span {margin-left: 6px; font-size: 26px;}
```
